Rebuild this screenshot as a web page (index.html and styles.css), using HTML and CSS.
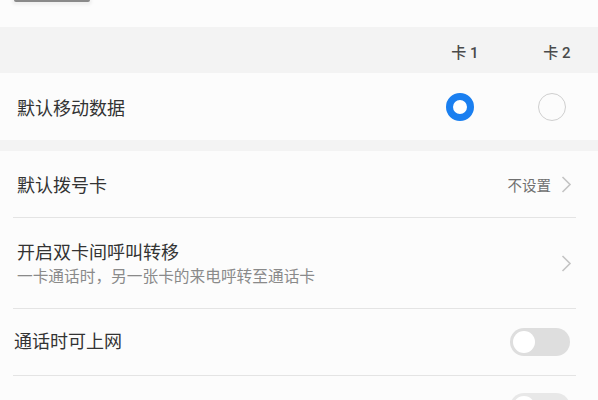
FILE: index.html
```html
<!DOCTYPE html>
<html lang="zh">
<head>
<meta charset="utf-8">
<link rel="stylesheet" href="styles.css">
</head>
<body>
<div class="top"><div class="topbar"></div></div>
<div class="band head">
  <span class="col lab">卡 1</span>
  <span class="col lab">卡 2</span>
</div>
<div class="row data">
  <span class="title">默认移动数据</span>
  <span class="spacer"></span>
  <span class="col"><span class="radio on"></span></span>
  <span class="col"><span class="radio"></span></span>
</div>
<div class="gap"></div>
<div class="list">
  <div class="row item">
    <span class="title">默认拨号卡</span>
    <span class="spacer"></span>
    <span class="value">不设置</span>
    <svg class="chev" viewBox="0 0 11 17" width="11" height="17"><polyline points="1.5,1 9,8.5 1.5,16" fill="none" stroke="#c4c4c4" stroke-width="1.6"/></svg>
  </div>
  <div class="divider"></div>
  <div class="row item tall">
    <div class="texts">
      <span class="title">开启双卡间呼叫转移</span>
      <span class="sub">一卡通话时，另一张卡的来电呼转至通话卡</span>
    </div>
    <span class="spacer"></span>
    <svg class="chev" viewBox="0 0 11 17" width="11" height="17"><polyline points="1.5,1 9,8.5 1.5,16" fill="none" stroke="#c4c4c4" stroke-width="1.6"/></svg>
  </div>
  <div class="divider"></div>
  <div class="row item sw">
    <span class="title narrow">通话时可上网</span>
    <span class="spacer"></span>
    <span class="toggle"><span class="knob"></span></span>
  </div>
  <div class="divider"></div>
  <div class="row item sw last">
    <span class="spacer"></span>
    <span class="toggle"><span class="knob"></span></span>
  </div>
</div>
</body>
</html>
```
FILE: styles.css
```css
html, body {
  margin: 0;
  padding: 0;
  background: #fcfcfc;
  font-family: "Noto Sans CJK SC", "Noto Sans", sans-serif;
  overflow: hidden;
  height: 400px;
}
.top {
  height: 27px;
  background: #fcfcfc;
}
.topbar {
  margin-left: 14px;
  width: 76px;
  height: 2px;
  background: #8a8a8a;
  border-radius: 0 0 2px 2px;
  box-shadow: 0 1px 3px 2px #f0f0f0;
}
.band {
  background: #f3f3f3;
}
.head {
  height: 46px;
  display: flex;
  justify-content: flex-end;
  align-items: center;
  padding-right: 32px;
}
.col {
  width: 28px;
  display: flex;
  justify-content: center;
}
.col + .col {
  margin-left: 64px;
}
.lab {
  font-family: Roboto, "Noto Sans CJK SC", sans-serif;
  font-size: 15px;
  font-weight: 500;
  color: #4a4a4a;
  white-space: nowrap;
  position: relative;
  left: 5px;
  top: 1px;
}
.row {
  display: flex;
  align-items: center;
  background: #fcfcfc;
}
.data {
  height: 67px;
  padding-left: 17px;
  padding-right: 32px;
}
.spacer {
  flex: 1;
}
.title {
  font-size: 18px;
  color: #333;
  line-height: 24px;
}
.radio {
  width: 28px;
  height: 28px;
  box-sizing: border-box;
  border-radius: 50%;
  border: 1.5px solid #cfcfcf;
  background: #fcfcfc;
}
.radio.on {
  border: 7.5px solid #1a7ff0;
  background: #fff;
}
.gap {
  height: 11px;
  background: #f3f3f3;
}
.item {
  height: 66px;
  padding-left: 17px;
  padding-right: 26px;
}
.item.tall {
  height: 90px;
}
.item.sw {
  padding-right: 28px;
}
.title.narrow {
  margin-left: -3px;
  position: relative;
  top: -2px;
}
.value {
  font-size: 14.5px;
  color: #707070;
  margin-right: 10px;
}
.chev {
  display: block;
}
.texts {
  display: flex;
  flex-direction: column;
  margin-top: 0;
}
.sub {
  font-size: 15.7px;
  color: #8a8a8a;
  line-height: 22px;
  margin-top: 2px;
}
.divider {
  height: 1px;
  background: #e4e4e4;
  margin-left: 13px;
  margin-right: 22px;
}
.toggle {
  width: 60px;
  height: 28px;
  border-radius: 14px;
  background: #dedede;
  display: flex;
  align-items: center;
  padding-left: 3px;
  box-sizing: border-box;
}
.knob {
  width: 22px;
  height: 22px;
  border-radius: 50%;
  background: #fff;
}
.last {
  align-items: flex-start;
  padding-top: 17px;
  box-sizing: border-box;
}
.last .toggle {
  background: #e8e8e8;
}
```
